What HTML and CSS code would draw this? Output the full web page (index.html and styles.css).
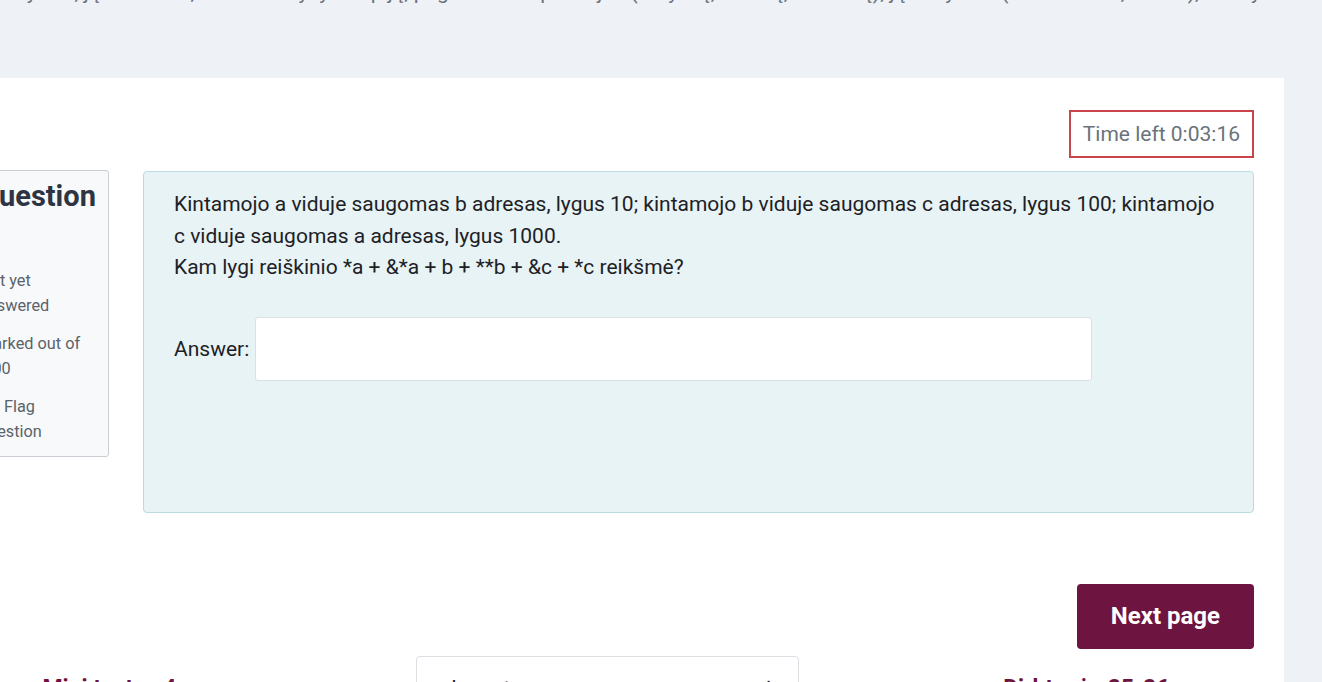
FILE: index.html
```html
<!DOCTYPE html>
<html lang="en">
<head>
<meta charset="utf-8">
<title>Quiz</title>
<link rel="stylesheet" href="styles.css">
</head>
<body>
<div class="intro">rodyklės, jų reikšmės, adresai ir ryšys tarp jų, pagrindinės operacijos (rodyklių, adresų, reikšmių), jų taikymas (1 klausimas, 5 min.), bandymai</div>
<div class="wrap">
  <main class="card">
    <div class="timer-row">
      <div class="timer">Time left 0:03:16</div>
    </div>
    <div class="que">
      <div class="info">
        <h3 class="qtitle">Question <span class="qno">1</span></h3>
        <div class="state">Not yet answered</div>
        <div class="grade">Marked out of 1.00</div>
        <div class="flag"><svg class="flag-icon" width="16" height="16" viewBox="0 0 16 16"><path d="M3 2v13M3 2h9l-2 3 2 3H3" fill="none" stroke="#6a737b" stroke-width="1.5"/></svg>Flag question</div>
      </div>
      <div class="formulation">
        <div class="qtext">Kintamojo a viduje saugomas b adresas, lygus 10; kintamojo b viduje saugomas c adresas, lygus 100; kintamojo c viduje saugomas a adresas, lygus 1000.<br>Kam lygi reiškinio *a + &amp;*a + b + **b + &amp;c + *c reikšmė?</div>
        <div class="answer">
          <label class="answer-label">Answer:</label>
          <div class="answer-input"></div>
        </div>
      </div>
    </div>
    <div class="submit-row">
      <button class="next-btn">Next page</button>
    </div>
    <div class="activity-nav">
      <a class="nav-link prev">◄ Mini testas 4</a>
      <div class="jump">Jump to...<span class="caret">⬍</span></div>
      <a class="nav-link next">Dirbtuvės 25-26 ►</a>
    </div>
  </main>
</div>
</body>
</html>
```
FILE: styles.css
```css
html, body {
  margin: 0;
  padding: 0;
}
body {
  background: #eef1f6;
  font-family: Roboto, "Noto Sans", "Liberation Sans", sans-serif;
  color: #1d2125;
  overflow: hidden;
  height: 682px;
}
.intro {
  margin-top: -23px;
  margin-left: -4px;
  font-size: 21px;
  line-height: 31px;
  height: 31px;
  color: #6a737b;
  white-space: nowrap;
}
.wrap {
  display: flex;
  padding-top: 70px;
}
.card {
  flex: none;
  width: 1284px;
  margin-left: -60px;
  background: #fff;
  padding: 32px 30px 40px 30px;
  min-height: 700px;
}
.timer-row {
  display: flex;
  justify-content: flex-end;
}
.timer {
  border: 2px solid #c9444b;
  padding: 8px 12px;
  font-size: 21px;
  line-height: 28px;
  color: #6a737b;
}
.que {
  display: flex;
  align-items: flex-start;
  gap: 34px;
  margin-top: 12px;
}
.info {
  flex: none;
  width: 121px;
  padding: 8px 8px 12px 8px;
  background: #f8f9fa;
  border: 1px solid #c9ced5;
  border-radius: 3px;
  font-size: 16.3px;
  line-height: 25px;
  color: #5b636b;
}
.qtitle {
  margin: 0 0 21px 0;
  font-size: 29px;
  line-height: 34px;
  font-weight: 700;
  color: #2e3542;
}
.grade, .flag {
  margin-top: 13px;
}
.flag-icon {
  vertical-align: -2px;
  margin-right: 9px;
}
.formulation {
  flex: 1;
  margin-top: 1px;
  background: #e7f3f5;
  border: 1px solid #b8dce2;
  border-radius: 4px;
  padding: 17px 30px 131px 30px;
}
.qtext {
  font-size: 21px;
  line-height: 31.5px;
  color: #1d2125;
}
.answer {
  display: flex;
  align-items: center;
  gap: 6px;
  margin-top: 33px;
}
.answer-label {
  font-size: 21px;
  color: #1d2125;
}
.answer-input {
  width: 835px;
  height: 62px;
  background: #fff;
  border: 1px solid #dcdfe3;
  border-radius: 3px;
}
.submit-row {
  display: flex;
  justify-content: flex-end;
  margin-top: 71px;
}
.next-btn {
  background: #6e1440;
  color: #fff;
  border: none;
  border-radius: 4px;
  font-family: Roboto, "Noto Sans", "Liberation Sans", sans-serif;
  font-weight: 700;
  font-size: 24px;
  line-height: 27px;
  padding: 19px 34px;
}
.activity-nav {
  display: grid;
  grid-template-columns: 446px 383px 1fr;
  align-items: start;
  margin-top: 7px;
}
.nav-link {
  color: #6e1440;
  font-weight: 700;
  font-size: 23px;
  line-height: 30px;
  margin-top: 18px;
  text-decoration: none;
}
.prev {
  padding-left: 44px;
}
.next {
  justify-self: end;
  margin-right: 56px;
}
.jump {
  height: 62px;
  border: 1px solid #dcdfe3;
  border-radius: 4px;
  padding: 0 22px 0 28px;
  display: flex;
  align-items: center;
  justify-content: space-between;
  font-size: 21px;
  color: #1d2125;
}
.caret {
  font-size: 18px;
}
```
